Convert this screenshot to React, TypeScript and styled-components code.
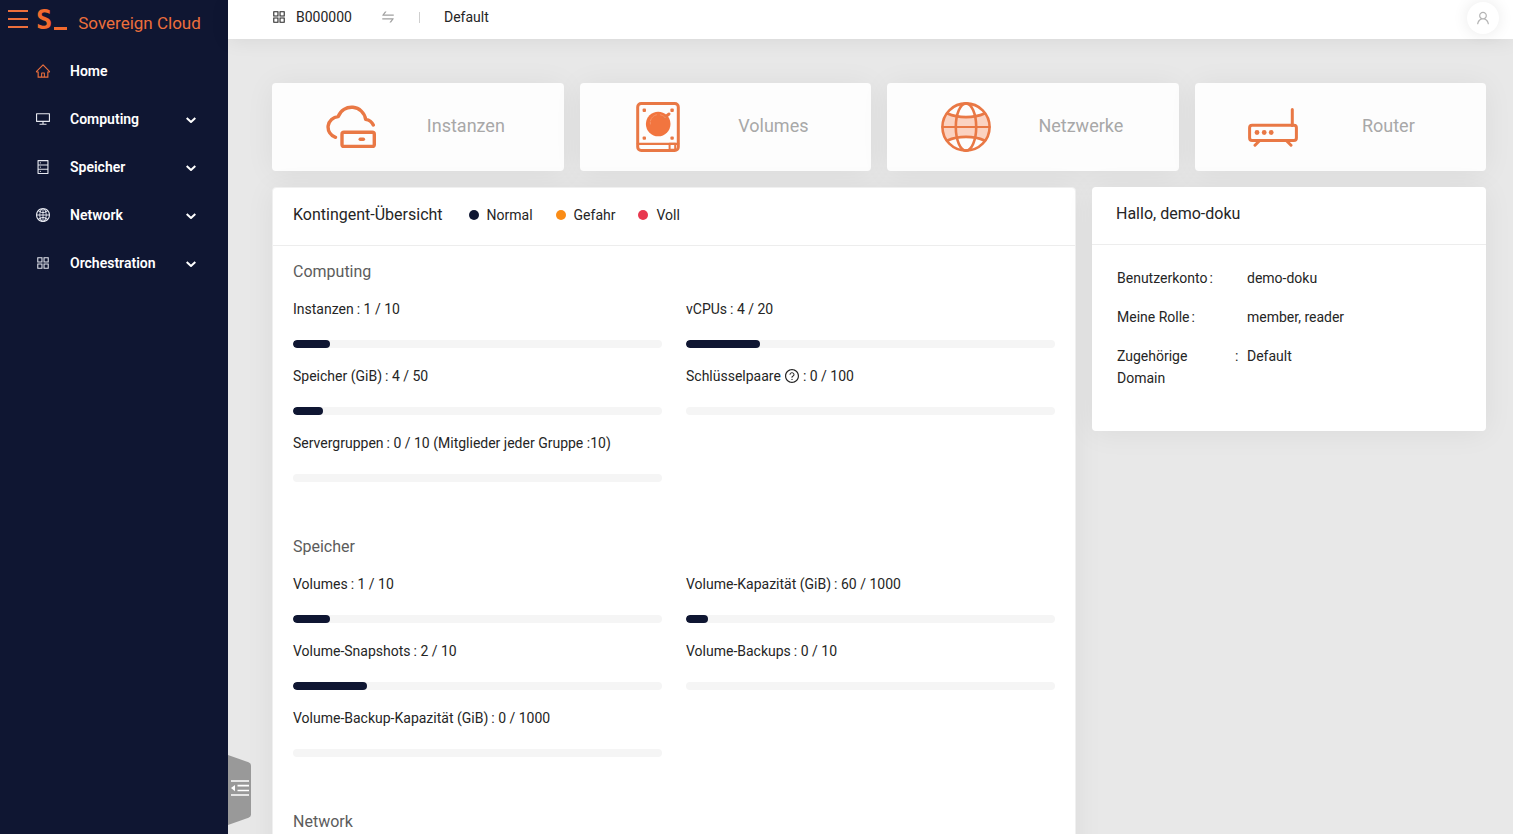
import React from 'react';
import styled, { createGlobalStyle } from 'styled-components';
import {
  AiOutlineAppstore,
  AiOutlineDatabase,
  AiOutlineDesktop,
  AiOutlineGlobal,
  AiOutlineHome,
  AiOutlineQuestionCircle,
  AiOutlineSwap,
  AiOutlineUser,
} from 'react-icons/ai';

const navy = '#0f1632';
const orange = '#ed6f3c';

const GlobalStyle = createGlobalStyle`
  *, *::before, *::after { box-sizing: border-box; }
  body {
    margin: 0;
    background: #e8e8e8;
    color: #252525;
    font: 400 14px/22px Roboto, "Liberation Sans", sans-serif;
  }
  button { font: inherit; color: inherit; background: none; border: 0; padding: 0; cursor: pointer; }
  h1, h2, h3, p, ul, dl, dd { margin: 0; padding: 0; }
  svg { display: block; flex: none; }
`;

const Shell = styled.div`
  display: flex;
  height: 100vh;
  overflow: hidden;
`;

/* ---------- Sidebar ---------- */

const Sidebar = styled.aside`
  flex: none;
  width: 228px;
  background: ${navy};
  color: #fff;
`;

const Brand = styled.div`
  display: flex;
  align-items: center;
  height: 39px;
  padding-left: 8px;
  color: ${orange};
`;

const MenuToggle = styled.button`
  padding-bottom: 2px;
  color: ${orange};
`;

const Logo = styled.span`
  display: flex;
  align-items: flex-end;
  gap: 2px;
  margin-left: 8px;
  font: 700 27px/28px "DejaVu Sans Mono", monospace;
  color: #f26a2e;
  &::after {
    content: '';
    width: 13px;
    height: 3px;
    margin-bottom: 4px;
    background: currentColor;
  }
`;

const BrandName = styled.span`
  margin-left: 11px;
  padding-top: 7px;
  font-size: 17px;
  line-height: 24px;
`;

const Menu = styled.ul`
  list-style: none;
  padding-top: 8px;
`;

const MenuLink = styled.a<{ $active?: boolean }>`
  display: flex;
  align-items: center;
  height: 48px;
  padding: 0 31px 0 35px;
  color: #fff;
  font-weight: 600;
  text-decoration: none;
  > svg:first-child {
    margin-right: 19px;
    color: ${(p) => (p.$active ? orange : '#e6e8f0')};
  }
`;

const MenuLabel = styled.span`
  flex: 1;
`;

/* ---------- Top bar ---------- */

const Content = styled.div`
  display: flex;
  flex: 1;
  flex-direction: column;
  min-width: 0;
`;

const TopBar = styled.header`
  position: relative;
  z-index: 1;
  display: flex;
  flex: none;
  align-items: center;
  height: 39px;
  padding: 0 14px 5px 43px;
  background: #fff;
  box-shadow: 0 2px 20px rgba(0, 0, 0, 0.07);
`;

const Project = styled.button`
  display: flex;
  align-items: center;
  gap: 9px;
  min-width: 86px;
`;

const SwapButton = styled.button`
  margin-left: 23px;
  color: #a0a0a0;
`;

const Divider = styled.span`
  width: 1px;
  height: 11px;
  margin: 0 24px 0 23px;
  background: #cfcfcf;
`;

const Avatar = styled.button`
  display: grid;
  place-items: center;
  width: 32px;
  height: 32px;
  margin: 2px 0 0 auto;
  border-radius: 50%;
  background: #fff;
  color: #b4b4b4;
  box-shadow: 0 0 16px rgba(0, 0, 0, 0.09);
`;

/* ---------- Dashboard ---------- */

const Main = styled.main`
  flex: 1;
  min-height: 0;
  overflow: auto;
  scrollbar-width: none;
  padding: 44px 27px 44px 44px;
`;

const Tiles = styled.div`
  display: grid;
  grid-template-columns: repeat(4, 1fr);
  gap: 16px;
`;

const Tile = styled.button`
  display: grid;
  grid-template-columns: 34fr 45fr;
  align-items: center;
  justify-items: center;
  height: 88px;
  padding: 0 11% 0 10%;
  border-radius: 4px;
  background: #fdfdfd;
  box-shadow: 0 2px 30px rgba(0, 0, 0, 0.06);
  color: #a8a8a8;
  font-size: 18px;
  line-height: 26px;
`;

const TileLabel = styled.span`
  padding-bottom: 3px;
`;

const Panels = styled.div`
  display: grid;
  grid-template-columns: repeat(3, 1fr);
  gap: 16px;
  align-items: start;
  margin-top: 16px;
`;

const Panel = styled.section`
  border-radius: 4px;
  background: #fff;
  box-shadow: 0 2px 30px rgba(0, 0, 0, 0.06);
`;

const QuotaPanel = styled(Panel)`
  grid-column: span 2;
  border: 1px solid #f0f0f0;
`;

const PanelHead = styled.div<{ $inset: number }>`
  display: flex;
  align-items: center;
  height: 58px;
  padding: 0 ${(p) => p.$inset}px 4px;
  border-bottom: 1px solid #ededed;
`;

const PanelTitle = styled.h2`
  font-size: 16px;
  line-height: 24px;
  font-weight: 400;
`;

const Legend = styled.ul`
  display: flex;
  gap: 23px;
  margin-left: 26px;
  padding-top: 1px;
  list-style: none;
`;

const LegendItem = styled.li<{ $color: string }>`
  display: flex;
  align-items: center;
  gap: 8px;
  &::before {
    content: '';
    width: 10px;
    height: 10px;
    border-radius: 50%;
    background: ${(p) => p.$color};
  }
`;

const QuotaBody = styled.div`
  display: flex;
  flex-direction: column;
  gap: 36px;
  padding: 14px 20px 24px;
`;

const GroupTitle = styled.h3`
  color: #5c5c5c;
  font-size: 16px;
  line-height: 24px;
  font-weight: 400;
`;

const QuotaGrid = styled.div`
  display: grid;
  grid-template-columns: 1fr 1fr;
  column-gap: 24px;
  margin-top: 14px;
`;

const Quota = styled.div`
  padding-bottom: 17px;
`;

const QuotaLabel = styled.p`
  display: flex;
  align-items: center;
  gap: 3px;
  margin-bottom: 20px;
`;

const Track = styled.div`
  height: 8px;
  overflow: hidden;
  border-radius: 4px;
  background: #f5f5f5;
`;

const Bar = styled.div`
  height: 8px;
  border-radius: 4px;
  background: ${navy};
`;

const Details = styled.dl`
  display: grid;
  grid-template-columns: 130px 1fr;
  row-gap: 17px;
  padding: 22px 25px 42px;
`;

const Term = styled.dt`
  display: flex;
  gap: 2px;
  padding-right: 7px;
`;

const TermText = styled.span`
  max-width: 116px;
`;

const CollapseHandle = styled.button`
  position: fixed;
  left: 228px;
  bottom: 9px;
  z-index: 2;
`;

/* ---------- Drawings ---------- */

const strokeProps = {
  fill: 'none',
  stroke: '#e97845',
  strokeWidth: 3.4,
  strokeLinecap: 'round' as const,
  strokeLinejoin: 'round' as const,
};

const InstanceIcon = () => (
  <svg width="50" height="50" viewBox="0 0 50 50" {...strokeProps}>
    <path d="M9.500 35.300A10.600 10.600 0 0 1 12.200 14.600A14.200 14.200 0 0 1 39.600 17.300C43.500 18 46 20 47.300 23" />
    <rect x="16" y="30.200" width="32.300" height="14.200" rx="2" />
    <path d="M34.200 37.200h3.200" />
  </svg>
);

const VolumeIcon = () => (
  <svg width="50" height="50" viewBox="0 0 50 50" {...strokeProps} strokeWidth={3}>
    <rect x="4.7" y="1.6" width="40.6" height="46.8" rx="3.5" />
    <path d="M4.7 41.800h40.6" strokeWidth="2.2" />
    <rect x="36.600" y="41.800" width="5.600" height="6" strokeWidth="2" />
    <circle cx="25.2" cy="22" r="12.3" fill="#f2753f" stroke="none" />
    <path d="M31 16l5-4" strokeWidth="3" />
    <path d="M17.4 22a8 8 0 0 1 6-9.2M27.5 12.8a9 9 0 0 1 5 3.2" stroke="#f7a27d" strokeWidth="0.7" strokeDasharray="2 1.4" />
    <g fill="#e97845" stroke="none">
      <rect x="9.6" y="6.6" width="3.4" height="3.4" rx="1" />
      <rect x="37.4" y="6.6" width="3.4" height="3.4" rx="1" />
      <rect x="9.6" y="34.4" width="3.4" height="3.4" rx="1" />
      <rect x="37.4" y="34.4" width="3.4" height="3.4" rx="1" />
    </g>
  </svg>
);

const NetworkIcon = () => (
  <svg width="50" height="50" viewBox="0 0 50 50" {...strokeProps} strokeWidth={2.6}>
    <path d="M6 12.5Q25 18.5 44 12.5Q52 25 44 37.5Q25 31.5 6 37.5Q-2 25 6 12.5Z" fill="#fbd2c1" stroke="none" />
    <circle cx="25" cy="25" r="23.6" />
    <path d="M1.5 25h47" strokeWidth="2.2" />
    <ellipse cx="25" cy="25" rx="10.2" ry="23.6" />
    <path d="M6.5 11.5C17 16.3 33 16.3 43.5 11.5M6.5 38.5C17 33.7 33 33.7 43.5 38.5" />
  </svg>
);

const RouterIcon = () => (
  <svg width="50" height="50" viewBox="0 0 50 50" {...strokeProps} strokeWidth={3}>
    <rect x="1.6" y="23.2" width="46.8" height="15.2" rx="2.5" />
    <path d="M44.3 7.5v16M11 39.2l-4 4M39 39.2l4 4" />
    <g fill="#e97845" stroke="none">
      <circle cx="9" cy="30.5" r="2.4" />
      <circle cx="16.2" cy="30.5" r="2.4" />
      <circle cx="23.2" cy="30.5" r="2.4" />
    </g>
  </svg>
);

const HamburgerIcon = () => (
  <svg width="20" height="18" viewBox="0 0 20 18" fill="currentColor">
    <path d="M0 0h20v2H0zM0 8h20v2H0zM0 16h20v2H0z" />
  </svg>
);

const ChevronIcon = () => (
  <svg width="12" height="12" viewBox="0 0 12 12" fill="none" stroke="#fff" strokeWidth="2">
    <path d="M1.7 5L6 9l4.3-4" strokeLinejoin="round" />
  </svg>
);

const HandleIcon = () => (
  <svg width="23" height="70" viewBox="0 0 23 70">
    <path d="M0 0L20.5 7.2Q23 8.2 23 10.5V59.5Q23 61.8 20.5 62.8L0 70Z" fill="#999" />
    <path d="M3 26h18M9.5 30.7h11.5M9.5 35.5h11.5M3 40h18" stroke="#fff" strokeWidth="1.7" />
    <path d="M3 33.1l4-3.1v6.2z" fill="#fff" />
  </svg>
);

/* ---------- Data ---------- */

const menu = [
  { label: 'Home', Icon: AiOutlineHome, active: true },
  { label: 'Computing', Icon: AiOutlineDesktop },
  { label: 'Speicher', Icon: AiOutlineDatabase },
  { label: 'Network', Icon: AiOutlineGlobal },
  { label: 'Orchestration', Icon: AiOutlineAppstore },
];

const tiles = [
  { label: 'Instanzen', Icon: InstanceIcon },
  { label: 'Volumes', Icon: VolumeIcon },
  { label: 'Netzwerke', Icon: NetworkIcon },
  { label: 'Router', Icon: RouterIcon },
];

type QuotaData = { name: string; used: number; limit: number; note?: string; help?: boolean };

const groups: { title: string; quotas: QuotaData[] }[] = [
  {
    title: 'Computing',
    quotas: [
      { name: 'Instanzen', used: 1, limit: 10 },
      { name: 'vCPUs', used: 4, limit: 20 },
      { name: 'Speicher (GiB)', used: 4, limit: 50 },
      { name: 'Schlüsselpaare', used: 0, limit: 100, help: true },
      { name: 'Servergruppen', used: 0, limit: 10, note: ' (Mitglieder jeder Gruppe :10)' },
    ],
  },
  {
    title: 'Speicher',
    quotas: [
      { name: 'Volumes', used: 1, limit: 10 },
      { name: 'Volume-Kapazität (GiB)', used: 60, limit: 1000 },
      { name: 'Volume-Snapshots', used: 2, limit: 10 },
      { name: 'Volume-Backups', used: 0, limit: 10 },
      { name: 'Volume-Backup-Kapazität (GiB)', used: 0, limit: 1000 },
    ],
  },
  { title: 'Network', quotas: [] },
];

const account = [
  ['Benutzerkonto', 'demo-doku'],
  ['Meine Rolle', 'member, reader'],
  ['Zugehörige Domain', 'Default'],
];

export default function App() {
  return (
    <>
      <GlobalStyle />
      <Shell>
        <Sidebar>
          <Brand>
            <MenuToggle aria-label="Menü">
              <HamburgerIcon />
            </MenuToggle>
            <Logo>S</Logo>
            <BrandName>Sovereign Cloud</BrandName>
          </Brand>
          <nav>
            <Menu>
              {menu.map(({ label, Icon, active }) => (
                <li key={label}>
                  <MenuLink href="#" $active={active}>
                    <Icon size={16} />
                    <MenuLabel>{label}</MenuLabel>
                    {!active && <ChevronIcon />}
                  </MenuLink>
                </li>
              ))}
            </Menu>
          </nav>
        </Sidebar>

        <Content>
          <TopBar>
            <Project>
              <AiOutlineAppstore size={16} />
              B000000
            </Project>
            <SwapButton aria-label="Projekt wechseln">
              <AiOutlineSwap size={16} />
            </SwapButton>
            <Divider />
            <span>Default</span>
            <Avatar aria-label="Benutzer">
              <AiOutlineUser size={16} />
            </Avatar>
          </TopBar>

          <Main>
            <Tiles>
              {tiles.map(({ label, Icon }) => (
                <Tile key={label}>
                  <Icon />
                  <TileLabel>{label}</TileLabel>
                </Tile>
              ))}
            </Tiles>

            <Panels>
              <QuotaPanel>
                <PanelHead $inset={20}>
                  <PanelTitle>Kontingent-Übersicht</PanelTitle>
                  <Legend>
                    <LegendItem $color={navy}>Normal</LegendItem>
                    <LegendItem $color="#fa8c16">Gefahr</LegendItem>
                    <LegendItem $color="#e8384f">Voll</LegendItem>
                  </Legend>
                </PanelHead>
                <QuotaBody>
                  {groups.map((group) => (
                    <div key={group.title}>
                      <GroupTitle>{group.title}</GroupTitle>
                      <QuotaGrid>
                        {group.quotas.map((q) => (
                          <Quota key={q.name}>
                            <QuotaLabel>
                              <span>{q.name}</span>
                              {q.help && <AiOutlineQuestionCircle size={16} />}
                              <span>{`: ${q.used} / ${q.limit}${q.note ?? ''}`}</span>
                            </QuotaLabel>
                            <Track
                              role="progressbar"
                              aria-label={q.name}
                              aria-valuenow={q.used}
                              aria-valuemax={q.limit}
                            >
                              <Bar style={{ width: `${(q.used / q.limit) * 100}%` }} />
                            </Track>
                          </Quota>
                        ))}
                      </QuotaGrid>
                    </div>
                  ))}
                </QuotaBody>
              </QuotaPanel>

              <Panel>
                <PanelHead $inset={24}>
                  <PanelTitle>Hallo, demo-doku</PanelTitle>
                </PanelHead>
                <Details>
                  {account.map(([term, value]) => (
                    <React.Fragment key={term}>
                      <Term>
                        <TermText>{term}</TermText>:
                      </Term>
                      <dd>{value}</dd>
                    </React.Fragment>
                  ))}
                </Details>
              </Panel>
            </Panels>
          </Main>
        </Content>

        <CollapseHandle aria-label="Seitenleiste einklappen">
          <HandleIcon />
        </CollapseHandle>
      </Shell>
    </>
  );
}
